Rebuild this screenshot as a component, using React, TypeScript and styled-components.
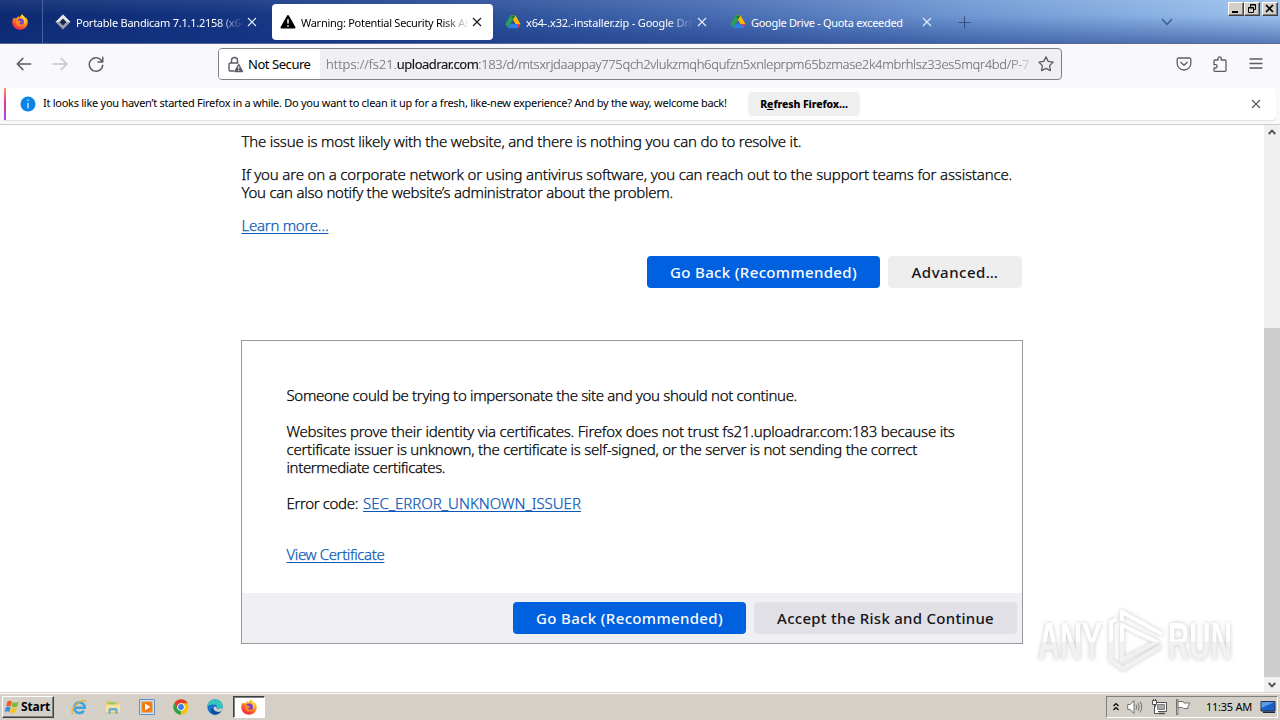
import type {ReactNode} from "react";
import styled, {createGlobalStyle} from "styled-components";

const GlobalStyle = createGlobalStyle`
    * {
        box-sizing: border-box;
    }

    body {
        margin: 0;
        overflow: hidden;
        background: #fff;
        font-family: "Noto Sans", "Open Sans", sans-serif;
        color: #000;
    }

    svg {
        display: block;
        flex: none;
    }
`;

const Screen = styled.div`
    width: 1280px;
    height: 720px;
    display: flex;
    flex-direction: column;
    overflow: hidden;
    position: relative;
`;

const Text = styled.span<{ $ls?: number }>`
    white-space: pre;
    letter-spacing: ${({$ls = 0}) => $ls}px;
`;

/* ---------- tab strip ---------- */

const TabStrip = styled.div`
    flex: none;
    height: 44px;
    display: flex;
    align-items: flex-start;
    background: linear-gradient(180deg, rgba(255, 255, 255, 0.08) 0%, rgba(255, 255, 255, 0) 35%, rgba(20, 50, 130, 0.5) 100%),
    linear-gradient(90deg, #0c2972 0%, #143482 18%, #2c509a 38%, #4b70b5 58%, #7099d3 76%, #9cc3ee 100%);
    border-bottom: 1px solid #56698f;
`;

const PinnedTab = styled.div`
    width: 43px;
    height: 43px;
    margin-right: 4px;
    padding: 14px 0 0 12px;
    border-right: 1px solid #48629c;
`;

const Tab = styled.div<{ $active?: boolean }>`
    width: 221px;
    height: 36px;
    margin: 4px 4px 0 0;
    padding: 0 11px 0 8px;
    display: flex;
    align-items: center;
    border-radius: 4px;
    font-size: 11px;
    color: ${({$active}) => ($active ? "#000" : "#fff")};
    background: ${({$active}) => ($active ? "#fff" : "transparent")};
`;

const TabTitle = styled.div<{ $fade?: boolean }>`
    flex: 1;
    min-width: 0;
    margin-left: 5px;
    margin-right: 3px;
    padding-top: 1px;
    overflow: hidden;
    line-height: 18px;
    ${({$fade}) => $fade && "mask-image: linear-gradient(90deg, #000 84%, transparent 100%);"}
`;

const NewTab = styled.div`
    padding: 16px 0 0 11px;
    flex: 1;
`;

const TabList = styled.div`
    padding: 18px 55px 0 0;
`;

const WindowControls = styled.div`
    display: flex;
    padding: 2px 2px 0 0;
`;

const WindowButton = styled.div<{ $gap?: boolean }>`
    width: 16px;
    height: 14px;
    margin-left: ${({$gap}) => ($gap ? 2 : 0)}px;
    background: #d4d0c8;
    border: 1px solid;
    border-color: #fff #404040 #404040 #fff;
    box-shadow: inset -1px -1px #808080;
`;

/* ---------- toolbar ---------- */

const Toolbar = styled.div`
    flex: none;
    height: 44px;
    display: flex;
    align-items: center;
    padding: 0 16px 4px 15px;
    background: #f9f9fb;
`;

const NavButtons = styled.div`
    display: flex;
    gap: 18px;
    width: 203px;
`;

const UrlBar = styled.div`
    width: 844px;
    height: 32px;
    display: flex;
    align-items: center;
    border: 1px solid #7f7f86;
    border-radius: 4px;
    background: #f0f0f4;
    font-size: 13px;
    overflow: hidden;
`;

const Identity = styled.div`
    width: 101px;
    height: 30px;
    display: flex;
    align-items: center;
    gap: 4px;
    padding-left: 8px;
    background: #fff;
`;

const Url = styled.div`
    flex: 1;
    min-width: 0;
    padding-left: 6px;
    overflow: hidden;
    white-space: pre;
    font-weight: 300;
    -webkit-text-stroke: 0.15px;
    color: #74747a;
    mask-image: linear-gradient(90deg, #000 96%, transparent 100%);
`;

const Domain = styled(Text)`
    font-weight: 400;
    color: #15141a;
`;

const StarSlot = styled.div`
    padding-right: 7px;
`;

const ToolbarIcons = styled.div`
    margin-left: auto;
    display: flex;
    gap: 20px;
`;

/* ---------- notification ---------- */

const NotificationArea = styled.div`
    flex: none;
    height: 37px;
    padding-left: 4px;
    padding-right: 4px;
    background: #f9f9fb;
    border-bottom: 1px solid #ccc;
`;

const Notification = styled.div`
    height: 32px;
    display: flex;
    align-items: center;
    padding: 0 15px 0 16px;
    background: linear-gradient(180deg, #ff9a5a, #e0359a 45%, #a04de0) left / 2px 100% no-repeat, #fff;
    border-radius: 0 4px 4px 0;
    box-shadow: 0 1px 1px rgba(58, 57, 68, 0.12);
    font-size: 11px;
`;

const NotificationText = styled.div`
    width: 712px;
    padding: 0 0 3px 7px;
`;

const RefreshButton = styled.button`
    width: 112px;
    height: 24px;
    padding: 0;
    border: 0;
    border-radius: 4px;
    background: #efeff0;
    font: 800 10.5px "Noto Sans", sans-serif;
    color: #000;
`;

const CloseSlot = styled.div`
    margin-left: auto;
`;

/* ---------- page ---------- */

const Viewport = styled.div`
    flex: 1;
    min-height: 0;
    display: flex;
    background: #fff;
`;

const Page = styled.main`
    width: 782px;
    margin-left: 241px;
    padding-top: 7px;
    font-size: 15px;
    line-height: 18px;
    font-weight: 300;
`;

const Paragraph = styled.p<{ $gap: number }>`
    margin: 0 0 ${({$gap}) => $gap}px;
    padding-left: 0.5px;
    display: flex;
    flex-direction: column;
    align-items: flex-start;
    -webkit-text-stroke: 0.25px;
`;

const Inline = styled.div`
    display: flex;
    gap: 5px;
`;

const Link = styled(Text)`
    color: #0a58b8;
    text-decoration: underline;
    text-decoration-thickness: 1px;
    text-underline-offset: 2px;
    text-decoration-skip-ink: none;
`;

const ButtonRow = styled.div`
    display: flex;
    justify-content: flex-end;
    gap: 8px;
    padding-right: 1px;
`;

const Button = styled.button<{ $width: number; $primary?: boolean; $dark?: boolean }>`
    width: ${({$width}) => $width}px;
    height: 32px;
    padding: 0;
    border: 0;
    border-radius: 4px;
    font: 500 15px "Noto Sans", sans-serif;
    color: ${({$primary}) => ($primary ? "#fbfbfe" : "#15141a")};
    background: ${({$primary, $dark}) => ($primary ? "#0061e0" : $dark ? "#e0e0e6" : "#eeeeef")};
`;

const Panel = styled.section`
    height: 304px;
    margin-top: 52px;
    display: flex;
    flex-direction: column;
    justify-content: space-between;
    border: 1px solid #98989d;
`;

const PanelBody = styled.div`
    padding: 45px 44px 0;
`;

const PanelFooter = styled.div`
    height: 50px;
    padding: 9px 4px 0 0;
    background: #f0f0f4;
`;

const Scrollbar = styled.div`
    width: 16px;
    margin-left: auto;
    display: flex;
    flex-direction: column;
    align-items: center;
    padding: 4px 0 4px;
    background: #f0f0f0;
`;

const ScrollThumb = styled.div`
    width: 16px;
    height: 349px;
    margin-top: auto;
    margin-bottom: 5px;
    background: #cdcdcd;
`;

/* ---------- taskbar ---------- */

const Taskbar = styled.footer`
    flex: none;
    height: 28px;
    display: flex;
    align-items: center;
    padding: 0 2px;
    background: #d4d0c8;
    border-top: 1px solid #d4d0c8;
    box-shadow: inset 0 1px #fff;
`;

const StartButton = styled.div`
    width: 52px;
    height: 22px;
    display: flex;
    align-items: center;
    gap: 1px;
    padding-left: 1px;
    border: 1px solid;
    border-color: #fff #404040 #404040 #fff;
    box-shadow: inset -1px -1px #808080;
    font-size: 12px;
    font-weight: 700;
`;

const QuickLaunch = styled.div`
    display: flex;
    align-items: center;
    gap: 18px;
    margin-left: 17px;
`;

const ActiveTask = styled.div`
    width: 32px;
    height: 22px;
    margin-left: 10px;
    display: flex;
    align-items: center;
    justify-content: center;
    background: #fff;
    border: 1px solid;
    border-color: #404040 #fff #fff #404040;
    box-shadow: inset 1px 1px #808080;
`;

const Tray = styled.div`
    height: 22px;
    width: 172px;
    margin-left: auto;
    display: flex;
    align-items: center;
    padding-left: 6px;
    border: 1px solid;
    border-color: #808080 #fff #fff #808080;
    font-size: 11px;
`;

const TrayIcons = styled.div`
    display: flex;
    align-items: center;
    gap: 8px;
    width: 93px;
`;

const Clock = styled.div`
    width: 54px;
`;

const Watermark = styled.svg`
    position: absolute;
    left: 1030px;
    top: 600px;
    filter: drop-shadow(0 0 2px rgba(0, 0, 0, 0.22));
`;

/* ---------- icons ---------- */

function FirefoxIcon() {
    return (
        <svg width="16" height="16" viewBox="0 0 16 16">
            <defs>
                <linearGradient id="fxBody" x1="0.8" y1="0" x2="0.2" y2="1">
                    <stop offset="0" stopColor="#ffe13a"/>
                    <stop offset="0.4" stopColor="#ff9a1f"/>
                    <stop offset="0.75" stopColor="#ff4433"/>
                    <stop offset="1" stopColor="#e8206a"/>
                </linearGradient>
            </defs>
            <path
                d="M10.2 0.3C11 2 13 3 14 4.8c.2-.4.1-.9.1-1.2 1.2 1.5 1.7 3.3 1.7 4.9a7.8 7.3 0 0 1-15.6 0C.2 6.3 1 4.6 2.2 3.2l.3 1.5C3.2 4 4.2 3.8 5 4c.4-1 1-1.7 1.7-2 0 .8.3 1.4.8 1.8C8 2.3 9 1.1 10.2.3z"
                fill="url(#fxBody)"/>
            <circle cx="8.4" cy="8" r="3.5" fill="#7b3fd0"/>
            <path d="M4 7c1-.9 2.6-.8 3.4 0 .8.6 1.7.4 2 .8-.6 1-1.8.9-2.2 1.6.4 1.4 2.6 1.6 4 .4-.5 2-2.2 3-3.8 2.8C5 12.3 3.7 9.5 4 7z"
                  fill="#ff8a1f"/>
            <path d="M10.2.3C9.4 2 9.8 3.4 11.2 4.6c1.7 1.5 1.4 4.4.3 5.6 2.8-1.7 2.9-4.8 1.7-6.7C12.2 2.3 10.8 1.6 10.2.3z" fill="#ffd43a"/>
        </svg>
    );
}

function BandicamSiteIcon() {
    return (
        <svg width="16" height="16" viewBox="0 0 16 16">
            <path d="M8 .5 15.5 8 8 15.5.5 8z" fill="#9b9ea8"/>
            <path d="M8 .5 15.5 8H11L8 5 5 8H.5z" fill="#e8e8ec"/>
            <path d="M8 4.5 11.5 8 8 11.5 4.5 8z" fill="#17284f"/>
        </svg>
    );
}

function DriveIcon() {
    return (
        <svg width="16" height="16" viewBox="0 0 16 16">
            <path d="M5.5 1.5h5L15.5 10H10.5z" fill="#ffba00"/>
            <path d="M5.5 1.5 8 5.7 3 14 .5 10z" fill="#26a05a"/>
            <path d="M5.5 1.5h5L8 5.7z" fill="#15803d"/>
            <path d="M5.5 10h10L13 14.2H3z" fill="#2f7de9"/>
            <path d="M12.2 10h3.3L13.2 14z" fill="#e8453c"/>
        </svg>
    );
}

function WarningIcon() {
    return (
        <svg width="16" height="16" viewBox="0 0 16 16">
            <path d="M8 2 14.5 13.5H1.5z" fill="#000" stroke="#000" strokeWidth="2" strokeLinejoin="round"/>
            <path d="M8 5.2v4.4M8 11.2v1.6" stroke="#fff" strokeWidth="1.5"/>
        </svg>
    );
}

function CloseIcon({color}: { color: string }) {
    return (
        <svg width="10" height="10" viewBox="0 0 10 10">
            <path d="M1 1 9 9M9 1 1 9" stroke={color} strokeWidth="1.1"/>
        </svg>
    );
}

function LineIcon({children, color = "#5b5b66", size = 16}: { children: ReactNode; color?: string; size?: number }) {
    return (
        <svg width={size} height={size} viewBox="0 0 16 16" fill="none" stroke={color} strokeWidth="1.3"
             strokeLinecap="round" strokeLinejoin="round">
            {children}
        </svg>
    );
}

function InfoIcon() {
    return (
        <svg width="16" height="16" viewBox="0 0 16 16">
            <circle cx="8" cy="8" r="7.5" fill="#0a84e8"/>
            <path d="M8 3.6v1.5M8 6.8v5.4" stroke="#d8f0ff" strokeWidth="1.3"/>
        </svg>
    );
}

function InsecureLock() {
    return (
        <svg width="17" height="17" viewBox="0 0 17 17" fill="none" stroke="#5b5b66" strokeWidth="1.4">
            <path d="M4.5 7V4.5a3 3 0 0 1 6 0V7M7 15H3.5a1.5 1.5 0 0 1-1.5-1.5v-5A1.5 1.5 0 0 1 3.5 7h8"/>
            <path d="M11.7 8.7 15.5 15.5H7.9z" fill="#5b5b66" strokeLinejoin="round"/>
            <path d="M11.7 10.3v2.5M11.7 13.8v1.2" stroke="#fff" strokeWidth="1.1"/>
        </svg>
    );
}

function StartFlag() {
    return (
        <svg width="16" height="16" viewBox="0 0 16 16">
            <path d="M3.5 2.5C5 1.5 6.5 1.7 8 2.6L6.8 7.3C5.3 6.5 4 6.4 2.3 7.3z" fill="#ee5a24"/>
            <path d="M8.8 3C10.5 3.9 12 3.9 14.5 2.8L13.2 7.6C11.5 8.5 9.5 8.5 7.6 7.6z" fill="#7fba2c"/>
            <path d="M2 8.2C3.7 7.4 5 7.4 6.5 8.3L5.3 13C3.8 12.2 2.3 12.1.7 13z" fill="#3a8de0"/>
            <path d="M7.3 8.6C9.3 9.5 11 9.5 12.9 8.6L11.6 13.3C9.8 14.2 8 14.2 6 13.3z" fill="#fcc21b"/>
        </svg>
    );
}

function IeIcon() {
    return (
        <svg width="16" height="16" viewBox="0 0 16 16" fill="none">
            <path d="M3.5 8.8h10.3a5.3 5.3 0 1 0-.9 2.9" stroke="#38a4e4" strokeWidth="2.5"/>
            <path d="M1.6 15C-.8 12 4 5.5 9.5 2.6c3-1.7 5.3-1.9 5.6.4" stroke="#e9b52e" strokeWidth="1.3"/>
        </svg>
    );
}

function ExplorerIcon() {
    return (
        <svg width="16" height="16" viewBox="0 0 16 16">
            <path d="M1 2h5l1 1.5h7V14H1z" fill="#e9c763"/>
            <path d="M3 3h8v3H3z" fill="#9cc779"/>
            <path d="M1 5.5h14V13H1z" fill="#f7e39a"/>
            <path d="M3.5 15v-4.5q0-1.5 1.5-1.5h6q1.5 0 1.5 1.5V15h-2v-3.5h-5V15z" fill="#62aee0"/>
        </svg>
    );
}

function MediaPlayerIcon() {
    return (
        <svg width="16" height="16" viewBox="0 0 16 16">
            <path d="M.5.5h15v15H.5z" fill="#cfe0f2" stroke="#5f93c8"/>
            <path d="M2.5 2.5h11v11h-11z" fill="#f58a1f"/>
            <circle cx="8" cy="8" r="4.8" fill="#f07812"/>
            <path d="M6 4.5 11.5 8 6 11.5z" fill="#fff"/>
        </svg>
    );
}

function ChromeIcon() {
    return (
        <svg width="16" height="16" viewBox="0 0 16 16">
            <circle cx="8" cy="8" r="7.7" fill="#f9c30f"/>
            <path d="M1.3 4.2A7.7 7.7 0 0 1 14.7 4.2H8L4.7 9.9z" fill="#e23b2e"/>
            <path d="M1.3 4.2 4.7 9.9 8 11.8 7.8 15.7A7.7 7.7 0 0 1 1.3 4.2z" fill="#2da04a"/>
            <circle cx="8" cy="8" r="3.8" fill="#fff"/>
            <circle cx="8" cy="8" r="2.9" fill="#3f7ee8"/>
        </svg>
    );
}

function EdgeIcon() {
    return (
        <svg width="16" height="16" viewBox="0 0 16 16">
            <circle cx="8" cy="8" r="7.7" fill="#1374c8"/>
            <path d="M.4 7.5C.8 3 4.3.3 8.2.3c4.3 0 7.5 3 7.5 6.3 0 2.4-1.9 3.6-4 3.6-1.5 0-2.4-.6-2-1.3.9-1.5-.2-3.3-2.5-3.3C4.5 5.6 1.5 6 .4 7.5z" fill="#36c5b8"/>
            <path d="M6 8.5c0 3.5 4 5.2 8 3.8-2 3-5.5 3.7-7.5 3.2C3.5 14 3 10 6 8.5z" fill="#0b4c9c"/>
            <path d="M9.7 8.9c-.4.7.5 1.3 2 1.3 1.5 0 3-.6 3.8-1.9-.1 1.6-.7 3-1.5 4-3.5 1.4-7.5-.3-7.5-3.3C7 7 9.5 7.5 9.7 8.9z" fill="#d4d0c8"/>
        </svg>
    );
}

function TrayMonitor() {
    return (
        <svg width="16" height="16" viewBox="0 0 16 16">
            <path d="M1 2.5h14v9.5H1z" fill="#1d5fc4" stroke="#20344f"/>
            <path d="M1.5 3h13L1.5 9z" fill="#5a9be8"/>
            <path d="M3 12.5h12v1.5H3z" fill="#16263c"/>
        </svg>
    );
}

function AnyRunMark() {
    return (
        <Watermark width="212" height="84" viewBox="0 0 212 84">
            <defs>
                <linearGradient id="wm" x1="0" y1="0" x2="0" y2="84" gradientUnits="userSpaceOnUse">
                    <stop offset="0.49" stopColor="#ffffff"/>
                    <stop offset="0.5" stopColor="#f1f1f1"/>
                </linearGradient>
            </defs>
            <g fill="url(#wm)" fontFamily='"Liberation Sans Narrow", "Liberation Sans", sans-serif' fontWeight="700" fontSize="51">
                <text x="8" y="59" textLength="64" lengthAdjust="spacingAndGlyphs">ANY</text>
                <text x="138" y="59" textLength="64" lengthAdjust="spacingAndGlyphs">RUN</text>
            </g>
            <g fill="none" stroke="url(#wm)" strokeWidth="4" strokeLinejoin="round">
                <path d="M92 25 127 42 92 60z"/>
                <path d="M92 21V12L132 34"/>
                <path d="M87 19 81 22V60L93 69 131 46"/>
            </g>
        </Watermark>
    );
}

interface TabProps {
    icon: ReactNode;
    title: string;
    ls: number;
    active?: boolean;
    fade?: boolean;
}

function BrowserTab({icon, title, ls, active, fade}: TabProps) {
    return (
        <Tab $active={active}>
            {icon}
            <TabTitle $fade={fade}><Text $ls={ls}>{title}</Text></TabTitle>
            <CloseIcon color={active ? "#15141a" : "#e4ecfa"}/>
        </Tab>
    );
}

export default function App() {
    return (
        <>
            <GlobalStyle/>
            <Screen>
                <TabStrip>
                    <PinnedTab><FirefoxIcon/></PinnedTab>
                    <BrowserTab icon={<BandicamSiteIcon/>} title="Portable Bandicam 7.1.1.2158 (x64" ls={-0.24} fade/>
                    <BrowserTab icon={<WarningIcon/>} title="Warning: Potential Security Risk Ah" ls={-0.28} active fade/>
                    <BrowserTab icon={<DriveIcon/>} title="x64-.x32.-installer.zip - Google Driv" ls={-0.18} fade/>
                    <BrowserTab icon={<DriveIcon/>} title="Google Drive - Quota exceeded" ls={-0.3}/>
                    <NewTab>
                        <svg width="13" height="13" viewBox="0 0 13 13"><path d="M6.5.5v12M.5 6.5h12" stroke="#39517f" strokeWidth="1.1"/></svg>
                    </NewTab>
                    <TabList>
                        <svg width="12" height="8" viewBox="0 0 12 8"><path d="M1 1 6 6.5 11 1" fill="none" stroke="#3c5c92" strokeWidth="1.4"/></svg>
                    </TabList>
                    <WindowControls>
                        <WindowButton>
                            <svg width="13" height="11" viewBox="0 0 13 11"><path d="M3 8h6v2H3z"/></svg>
                        </WindowButton>
                        <WindowButton>
                            <svg width="13" height="11" viewBox="0 0 13 11" fill="none" stroke="#000">
                                <path d="M5.5 4V1.5h5v5H9M5 2h6M3.5 4.5h5v5h-5zM3 5h6"/>
                            </svg>
                        </WindowButton>
                        <WindowButton $gap>
                            <svg width="13" height="11" viewBox="0 0 13 11"><path d="M3 2 10 9M10 2 3 9" stroke="#000" strokeWidth="1.7"/></svg>
                        </WindowButton>
                    </WindowControls>
                </TabStrip>

                <Toolbar>
                    <NavButtons>
                        <LineIcon size={18}><path d="M14 8H2M7 3 2 8l5 5"/></LineIcon>
                        <LineIcon size={18} color="#c4c4ca"><path d="M2 8h12M9 3l5 5-5 5"/></LineIcon>
                        <LineIcon size={18}><path d="M13.5 6A6 6 0 1 0 14 9M14 2v4.3H9.8"/></LineIcon>
                    </NavButtons>
                    <UrlBar>
                        <Identity>
                            <InsecureLock/>
                            <Text $ls={-0.45}>Not Secure</Text>
                        </Identity>
                        <Url>
                            <Text $ls={0}>https://fs21.</Text>
                            <Domain $ls={-0.5}>uploadrar.com</Domain>
                            <Text $ls={-0.33}>:183/d/mtsxrjdaappay775qch2vlukzmqh6qufzn5xnleprpm65bzmase2k4mbrhlsz33es5mqr4bd/P-7</Text>
                        </Url>
                        <StarSlot>
                            <LineIcon><path d="M8 .9 10.2 5.4l4.9.7-3.5 3.5.8 5L8 12.3 3.6 14.6l.8-5L.9 6.1l4.9-.7z"/></LineIcon>
                        </StarSlot>
                    </UrlBar>
                    <ToolbarIcons>
                        <LineIcon><path d="M2.5 2h11a1.3 1.3 0 0 1 1.3 1.3V7.5a6.8 6.5 0 0 1-13.6 0V3.3A1.3 1.3 0 0 1 2.5 2zM4.8 6.3 8 9.2l3.2-2.9"/></LineIcon>
                        <LineIcon><path d="M6 4V2.5a1.6 1.6 0 0 1 3.2 0V4H13a1 1 0 0 1 1 1v9.3a1 1 0 0 1-1 1H3a1 1 0 0 1-1-1V12h1.5a1.6 1.6 0 0 0 0-3.3H2V5a1 1 0 0 1 1-1z"/></LineIcon>
                        <LineIcon><path d="M2 3h12M2 7.5h12M2 12h12"/></LineIcon>
                    </ToolbarIcons>
                </Toolbar>

                <NotificationArea>
                    <Notification>
                        <InfoIcon/>
                        <NotificationText>
                            <Text $ls={-0.27}>It looks like you haven’t started Firefox in a while. Do you want to clean it up for a fresh, like-new experience? And by the way, welcome back!</Text>
                        </NotificationText>
                        <RefreshButton><Text $ls={-0.1}>R<u>e</u>fresh Firefox...</Text></RefreshButton>
                        <CloseSlot><CloseIcon color="#5b5b66"/></CloseSlot>
                    </Notification>
                </NotificationArea>

                <Viewport>
                    <Page>
                        <Paragraph $gap={15}>
                            <Text $ls={-0.21}>The issue is most likely with the website, and there is nothing you can do to resolve it.</Text>
                        </Paragraph>
                        <Paragraph $gap={15}>
                            <Text $ls={-0.16}>If you are on a corporate network or using antivirus software, you can reach out to the support teams for assistance.</Text>
                            <Text $ls={-0.26}>You can also notify the website’s administrator about the problem.</Text>
                        </Paragraph>
                        <Paragraph $gap={22}>
                            <Link $ls={-0.27}>Learn more…</Link>
                        </Paragraph>
                        <ButtonRow>
                            <Button $primary $width={233}><Text $ls={0.35}>Go Back (Recommended)</Text></Button>
                            <Button $width={134}><Text $ls={0.5}>Advanced…</Text></Button>
                        </ButtonRow>

                        <Panel>
                            <PanelBody>
                                <Paragraph $gap={18}>
                                    <Text $ls={-0.33}>Someone could be trying to impersonate the site and you should not continue.</Text>
                                </Paragraph>
                                <Paragraph $gap={18}>
                                    <Text $ls={-0.21}>Websites prove their identity via certificates. Firefox does not trust fs21.uploadrar.com:183 because its</Text>
                                    <Text $ls={-0.26}>certificate issuer is unknown, the certificate is self-signed, or the server is not sending the correct</Text>
                                    <Text $ls={-0.38}>intermediate certificates.</Text>
                                </Paragraph>
                                <Paragraph $gap={33}>
                                    <Inline>
                                        <Text $ls={-0.36}>Error code:</Text>
                                        <Link $ls={0}>SEC_ERROR_UNKNOWN_ISSUER</Link>
                                    </Inline>
                                </Paragraph>
                                <Paragraph $gap={0}>
                                    <Link $ls={-0.38}>View Certificate</Link>
                                </Paragraph>
                            </PanelBody>
                            <PanelFooter>
                                <ButtonRow>
                                    <Button $primary $width={233}><Text $ls={0.35}>Go Back (Recommended)</Text></Button>
                                    <Button $dark $width={263}><Text $ls={0.27}>Accept the Risk and Continue</Text></Button>
                                </ButtonRow>
                            </PanelFooter>
                        </Panel>
                    </Page>
                    <Scrollbar>
                        <svg width="8" height="6" viewBox="0 0 8 6"><path d="M.7 5 4 1.7 7.3 5" fill="none" stroke="#505050" strokeWidth="1.9"/></svg>
                        <ScrollThumb/>
                        <svg width="8" height="6" viewBox="0 0 8 6"><path d="M.7 1 4 4.3 7.3 1" fill="none" stroke="#505050" strokeWidth="1.9"/></svg>
                    </Scrollbar>
                </Viewport>

                <Taskbar>
                    <StartButton><StartFlag/><Text $ls={-0.1}>Start</Text></StartButton>
                    <QuickLaunch>
                        <IeIcon/>
                        <ExplorerIcon/>
                        <MediaPlayerIcon/>
                        <ChromeIcon/>
                        <EdgeIcon/>
                    </QuickLaunch>
                    <ActiveTask><FirefoxIcon/></ActiveTask>
                    <Tray>
                        <TrayIcons>
                            <svg width="6" height="9" viewBox="0 0 6 9"><path d="M.5 4 3 1.5 5.5 4M.5 8 3 5.5 5.5 8" fill="none" stroke="#000" strokeWidth="1.2"/></svg>
                            <svg width="16" height="16" viewBox="0 0 16 16" fill="none" stroke="#707070">
                                <path d="M.7 5.5h2.5L7 1.5v13L3.2 10.5H.7z" fill="#fff"/>
                                <path d="M9 5.5q1.5 2.5 0 5M11 4q2.5 4 0 8M13 2.5q3.5 5.5 0 11"/>
                            </svg>
                            <svg width="16" height="16" viewBox="0 0 16 16" fill="none" stroke="#505050">
                                <path d="M4.5 3.5h11v9h-11z" fill="#fff"/>
                                <path d="M6.5 5.5h7v5h-7z" fill="#a9a9a9" stroke="#808080"/>
                                <path d="M8 14.5h6" strokeWidth="1.5"/>
                                <path d="M1.5 1.5h4v4h-4zM3.5 6v8.5H8M2.5 0v2M4.5 0v2" fill="#fff"/>
                            </svg>
                            <svg width="16" height="16" viewBox="0 0 16 16" stroke="#707070" fill="#fff">
                                <path d="M1.5.5h1.5v15H1.5z"/>
                                <path d="M3 2.5h5l1 1.5h6l-2 3.5v2H8.5L7.5 8.5H3z"/>
                            </svg>
                        </TrayIcons>
                        <Clock><Text $ls={-0.25}>11:35 AM</Text></Clock>
                        <TrayMonitor/>
                    </Tray>
                </Taskbar>
                <AnyRunMark/>
            </Screen>
        </>
    );
}
